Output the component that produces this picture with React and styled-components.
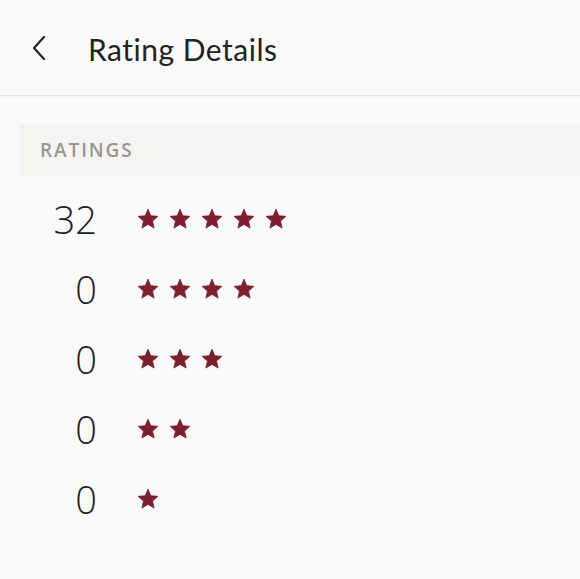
import React from 'react';
import styled, { createGlobalStyle } from 'styled-components';

const GlobalStyle = createGlobalStyle`
  html, body {
    margin: 0;
    padding: 0;
    background: #fafafa;
  }
  body {
    font-family: Lato, "Open Sans", sans-serif;
  }
`;

const ratings = [
  { count: 32, stars: 5 },
  { count: 0, stars: 4 },
  { count: 0, stars: 3 },
  { count: 0, stars: 2 },
  { count: 0, stars: 1 },
];

const Star = () => (
  <svg width="22" height="22" viewBox="0 0 24 24">
    <polygon
      points="12,1.2 15.1,8.4 22.9,9.1 17,14.3 18.7,21.9 12,17.9 5.3,21.9 7,14.3 1.1,9.1 8.9,8.4"
      fill="#7d1f2e"
      stroke="#7d1f2e"
      strokeWidth="0.8"
      strokeLinejoin="round"
    />
  </svg>
);

const RatingDetails = () => {
  return (
    <Page>
      <Header>
        <BackButton aria-label="Back">
          <svg width="16" height="26" viewBox="0 0 16 26">
            <path
              d="M13 2 L3 13 L13 24"
              fill="none"
              stroke="#222"
              strokeWidth="2.2"
              strokeLinecap="round"
              strokeLinejoin="round"
            />
          </svg>
        </BackButton>
        <Title>Rating Details</Title>
      </Header>
      <SectionHeader>RATINGS</SectionHeader>
      <List>
        {ratings.map(r => (
          <Row key={r.stars}>
            <Count>{r.count}</Count>
            <Stars>
              {Array.from({ length: r.stars }).map((_, i) => (
                <Star key={i} />
              ))}
            </Stars>
          </Row>
        ))}
      </List>
    </Page>
  );
};

const Page = styled.div`
  width: 580px;
  min-height: 579px;
  background: #fafafa;
`;

const Header = styled.div`
  display: flex;
  align-items: center;
  height: 96px;
  padding: 3px 0 0 31px;
  box-sizing: border-box;
  border-bottom: 1px solid #e4e4e4;
  box-shadow: 0 1px 3px rgba(0, 0, 0, 0.05);
`;

const BackButton = styled.button`
  display: flex;
  align-items: center;
  background: none;
  border: none;
  padding: 0;
  margin: -3px 41px 0 0;
  cursor: pointer;
`;

const Title = styled.h1`
  margin: 0;
  font-family: Lato, sans-serif;
  font-size: 30px;
  font-weight: 400;
  color: #222;
  letter-spacing: 0.5px;
`;

const SectionHeader = styled.div`
  margin: 27px 0 0 20px;
  height: 53px;
  display: flex;
  align-items: center;
  padding-left: 20px;
  background: #f6f4f1;
  font-family: "Open Sans", sans-serif;
  font-size: 19px;
  font-weight: 600;
  letter-spacing: 1.9px;
  color: #9a9692;
`;

const List = styled.div`
  padding-top: 8px;
`;

const Row = styled.div`
  display: flex;
  align-items: center;
  height: 70px;
`;

const Count = styled.div`
  width: 97px;
  text-align: right;
  font-family: "Open Sans", sans-serif;
  font-size: 38px;
  font-weight: 300;
  color: #222;
`;

const Stars = styled.div`
  display: flex;
  gap: 10px;
  margin-left: 40px;
`;

export default function App() {
  return (
    <>
      <GlobalStyle />
      <RatingDetails />
    </>
  );
}
